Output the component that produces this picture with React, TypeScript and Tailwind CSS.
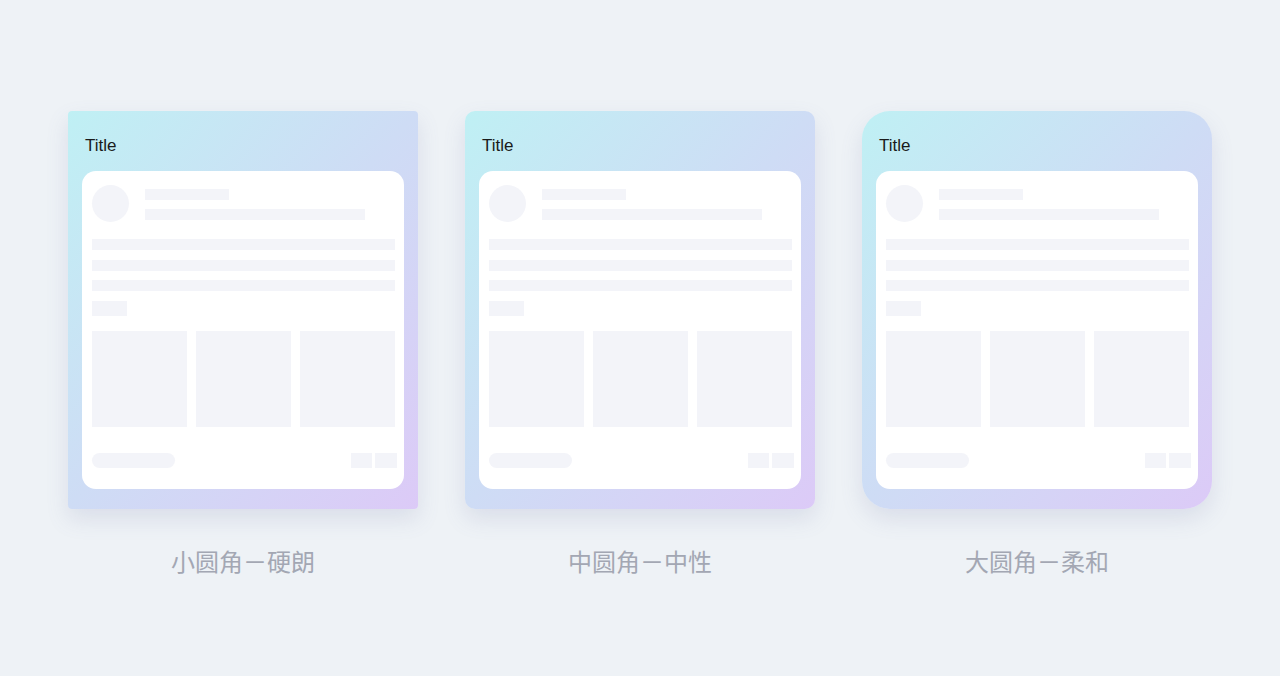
import React from "react";

const Skeleton = () => (
  <div className="flex flex-col rounded-[14px] bg-white pt-[14px] pb-[21px] pl-[10px] pr-[9px]">
    <div className="flex gap-[16px]">
      <div className="h-[37px] w-[37px] shrink-0 rounded-full bg-[#f3f4f9]" />
      <div className="flex flex-col gap-[9px] pt-[4px]">
        <div className="h-[11px] w-[84px] bg-[#f3f4f9]" />
        <div className="h-[11px] w-[220px] bg-[#f3f4f9]" />
      </div>
    </div>
    <div className="mt-[17px] flex flex-col gap-[9.5px]">
      <div className="h-[11px] bg-[#f3f4f9]" />
      <div className="h-[11px] bg-[#f3f4f9]" />
      <div className="h-[11px] bg-[#f3f4f9]" />
    </div>
    <div className="mt-[9.7px] h-[15px] w-[35px] bg-[#f3f4f9]" />
    <div className="mt-[15.3px] grid grid-cols-3 gap-[9px]">
      <div className="h-[95.7px] bg-[#f3f4f9]" />
      <div className="h-[95.7px] bg-[#f3f4f9]" />
      <div className="h-[95.7px] bg-[#f3f4f9]" />
    </div>
    <div className="mt-[26.3px] -mr-[2px] flex items-center justify-between">
      <div className="h-[15px] w-[83px] rounded-full bg-[#f3f4f9]" />
      <div className="flex gap-[3px]">
        <div className="h-[15px] w-[21px] bg-[#f3f4f9]" />
        <div className="h-[15px] w-[22px] bg-[#f3f4f9]" />
      </div>
    </div>
  </div>
);

const Card = ({ radius, label }: { radius: string; label: string }) => (
  <div className="flex w-[350px] flex-col items-center">
    <div
      className={`w-[350px] h-[398px] bg-gradient-to-br from-[#bff0f4] via-[#cedcf5] to-[#dccaf7] px-[14px] pt-[23px] pb-[20px] shadow-[0_10px_22px_rgba(110,120,170,0.16)] ${radius}`}
    >
      <div className="h-[24px] pl-[3px] text-[17px] leading-[24px] text-[#1a1a1a] font-['Liberation_Sans',Arial,sans-serif]">
        Title
      </div>
      <div className="mt-[13px]">
        <Skeleton />
      </div>
    </div>
    <div className="mt-[36px] h-[32px] text-[24px] leading-[32px] text-[#a3a7b3] font-['Noto_Sans_CJK_SC','Noto_Sans',sans-serif]">
      {label}
    </div>
  </div>
);

export default function App() {
  return (
    <div className="min-h-[676px] w-full bg-[#eef2f6] pt-[111px]">
      <div className="flex justify-center gap-[47px]">
        <Card radius="rounded-[4px]" label="小圆角－硬朗" />
        <Card radius="rounded-[10px]" label="中圆角－中性" />
        <Card radius="rounded-[28px]" label="大圆角－柔和" />
      </div>
    </div>
  );
}
